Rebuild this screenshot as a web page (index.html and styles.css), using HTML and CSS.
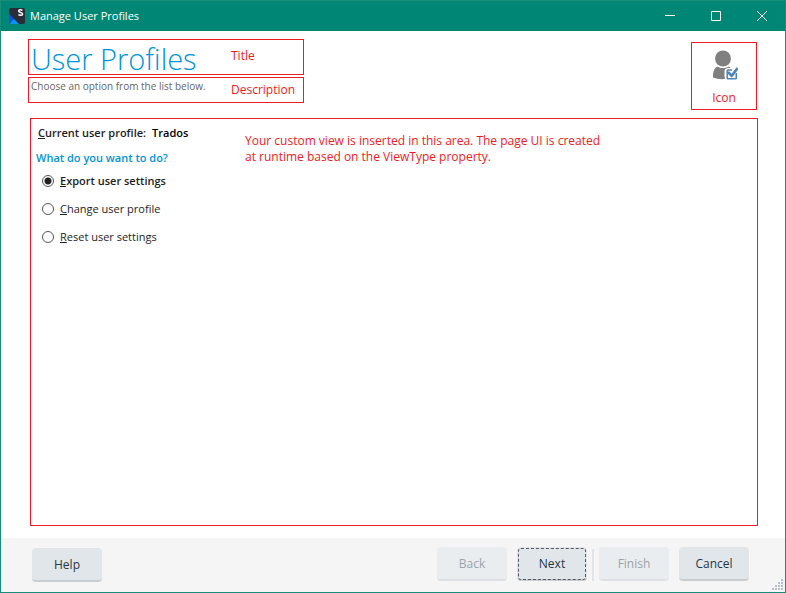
FILE: index.html
```html
<!DOCTYPE html>
<html lang="en">
<head>
<meta charset="utf-8">
<title>Manage User Profiles</title>
<link rel="stylesheet" href="styles.css">
</head>
<body>
<form class="window">
  <header class="titlebar">
    <svg class="app-icon" width="16" height="16" viewBox="0 0 16 16" aria-hidden="true">
      <defs><clipPath id="tile"><rect width="16" height="16" rx="2"/></clipPath></defs>
      <g clip-path="url(#tile)">
        <path fill="#292d3a" d="M0 0h16v16H0z"/>
        <path fill="#0754e8" d="M0 5.500V16l5-5z"/>
        <path fill="#0b91fa" d="M0 16l5-5 5 5z"/>
      </g>
      <path fill="none" stroke="#fff" stroke-width="1.5" d="M13.4 2.4C12 1.5 9.6 1.6 9.6 3.1c0 1.7 4 1.1 4 2.8 0 1.6-2.7 1.7-4.2.8"/>
    </svg>
    <span class="caption">Manage User Profiles</span>
    <button class="caption-button" type="button" aria-label="Minimize"><svg width="10" height="10" viewBox="0 0 10 10"><path d="M0 4.5h10"/></svg></button>
    <button class="caption-button" type="button" aria-label="Maximize"><svg width="10" height="10" viewBox="0 0 10 10"><path d="M.5.5h9v9h-9z"/></svg></button>
    <button class="caption-button" type="button" aria-label="Close"><svg width="10" height="10" viewBox="0 0 10 10"><path d="M0 0l10 10M10 0L0 10"/></svg></button>
  </header>

  <main class="page">
    <div class="page-header">
      <div class="heading">
        <div class="outlined title-row">
          <h1 class="title">User Profiles</h1>
          <span class="note">Title</span>
        </div>
        <div class="outlined description-row">
          <p class="description">Choose an option from the list below.</p>
          <span class="note">Description</span>
        </div>
      </div>
      <div class="outlined icon-box">
        <svg width="28" height="32" viewBox="0 0 28 32" aria-hidden="true">
          <circle cx="13" cy="8.5" r="8" fill="#808080"/>
          <path fill="#808080" d="M7.5 16.5c3 2 8 2 11 0 2.500 1 4 3 4.500 5v5.500Q12 31 3 27.500c0-5 .5-9 4.500-11z"/>
          <path fill="#fff" d="M14.5 21.5q0-3.5 4-3.500h4l4-3 1.500 3v12H16.500q-2-1-2-4z"/>
          <path fill="none" stroke="#4d83bd" stroke-width="1.5" d="M22 20h-4q-.8 0-.8.8v7.200q0 .8.8.8h7.500q.8 0 .8-.8V23"/>
          <path fill="none" stroke="#4d83bd" stroke-width="2.6" d="M18 22l3.700 3.800 5.900-7.800"/>
        </svg>
        <span class="note">Icon</span>
      </div>
    </div>

    <section class="outlined view">
      <div class="options">
        <p class="profile"><span><u>C</u>urrent user profile:</span><strong>Trados</strong></p>
        <fieldset class="choices">
          <legend class="question">What do you want to do?</legend>
          <label class="choice"><input type="radio" name="action" checked><span><u>E</u>xport user settings</span></label>
          <label class="choice"><input type="radio" name="action"><span><u>C</u>hange user profile</span></label>
          <label class="choice"><input type="radio" name="action"><span><u>R</u>eset user settings</span></label>
        </fieldset>
      </div>
      <p class="note view-note">Your custom view is inserted in this area. The page UI is created<br>at runtime based on the ViewType property.</p>
    </section>
  </main>

  <footer class="footer">
    <button class="button help" type="button">Help</button>
    <button class="button" type="button" disabled>Back</button>
    <button class="button default" type="button">Next</button>
    <span class="separator"></span>
    <button class="button" type="button" disabled>Finish</button>
    <button class="button" type="button">Cancel</button>
    <svg class="grip" width="12" height="12" viewBox="0 0 12 12" aria-hidden="true">
      <path fill="#b9bfcc" d="M9 0h2v2H9zM6 3h2v2H6zM9 3h2v2H9zM3 6h2v2H3zM6 6h2v2H6zM9 6h2v2H9zM0 9h2v2H0zM3 9h2v2H3zM6 9h2v2H6zM9 9h2v2H9z"/>
    </svg>
  </footer>
</form>
</body>
</html>
```
FILE: styles.css
```css
* {
  box-sizing: border-box;
}

body {
  margin: 0;
  font-family: "Open Sans", "Noto Sans", sans-serif;
  font-size: 11px;
  line-height: 16px;
  color: #1e1e1e;
}

h1,
p {
  margin: 0;
}

.window {
  display: flex;
  flex-direction: column;
  min-height: 100vh;
  border: 1px solid #1a8c7a;
  background: #fff;
}

.titlebar {
  display: flex;
  align-items: center;
  height: 30px;
  padding-left: 8px;
  background: #008675;
  color: #fff;
}

.caption {
  flex: 1;
  margin-left: 5px;
}

.caption-button {
  display: flex;
  align-items: center;
  justify-content: center;
  width: 46px;
  height: 30px;
  padding: 0;
  border: 0;
  background: none;
}

.caption-button path {
  fill: none;
  stroke: #fff;
}

.page {
  display: flex;
  flex: 1;
  flex-direction: column;
  padding: 8px 27px 12px;
}

.page-header {
  display: flex;
  justify-content: space-between;
  align-items: flex-start;
  padding-right: 1px;
}

.outlined {
  border: 1px solid #ec1c24;
}

.note {
  font-size: 12px;
  line-height: 16px;
  color: #ec1c24;
}

.heading {
  display: grid;
  gap: 2px;
  width: 276px;
}

.title-row,
.description-row {
  display: grid;
  grid-template-columns: 200px 1fr;
  padding-left: 2px;
}

.title-row {
  height: 36px;
}

.title-row .note {
  padding-top: 8px;
}

.description-row {
  height: 26px;
}

.title {
  padding-top: 2px;
  font-size: 29px;
  font-weight: 300;
  line-height: 34px;
  color: #0094d8;
}

.description {
  color: #666;
  font-size: 10px;
}

.description-row .note {
  padding-top: 4px;
}

.icon-box {
  display: flex;
  flex-direction: column;
  align-items: center;
  gap: 8px;
  width: 66px;
  height: 68px;
  margin-top: 3px;
  padding-top: 7px;
}

.view {
  display: flex;
  flex: 1;
  margin: 8px 0 0 2px;
}

.options {
  width: 214px;
  padding: 6px 0 0 5px;
}

.profile {
  display: flex;
  gap: 6px;
  padding-left: 2px;
  font-weight: 600;
}

.profile strong {
  color: #000;
  font-weight: 600;
}

.choices {
  min-width: 0;
  margin: 9px 0 0;
  padding: 0;
  border: 0;
}

.question {
  padding: 0;
  color: #0094d8;
  font-weight: 600;
}

.choice {
  display: flex;
  align-items: center;
  gap: 6px;
  height: 16px;
  margin: 7px 0 12px 6px;
}

.choice + .choice {
  margin-top: 0;
}

.choice:has(:checked) {
  font-weight: 600;
}

.choice input {
  appearance: none;
  width: 12px;
  height: 12px;
  margin: 0;
  border: 1px solid #555;
  border-radius: 50%;
}

.choice input:checked {
  background: radial-gradient(circle, #222 3px, #fff 4px);
}

.view-note {
  padding-top: 14px;
}

.footer {
  position: relative;
  display: flex;
  align-items: flex-start;
  height: 54px;
  padding: 9px 36px 0 31px;
  gap: 10px;
  background: #f5f5f5;
}

.button {
  width: 70px;
  height: 34px;
  padding: 2px 0 0;
  border: 0;
  border-bottom: 2px solid #c8cdd2;
  border-radius: 4px;
  background: #e1e6ea;
  color: #263645;
  font: inherit;
  font-size: 12px;
}

.button:disabled {
  border-color: #dfe0e5;
  background: #e9edf0;
  color: #9da3a8;
}

.help {
  margin: 1px auto 0 0;
}

.default {
  outline: 1px dashed #555b61;
  outline-offset: -2px;
}

.separator {
  width: 2px;
  height: 32px;
  margin: 2px -5px 0;
  background: #dfe4e8;
}

.grip {
  position: absolute;
  right: 1px;
  bottom: 1px;
}
```
